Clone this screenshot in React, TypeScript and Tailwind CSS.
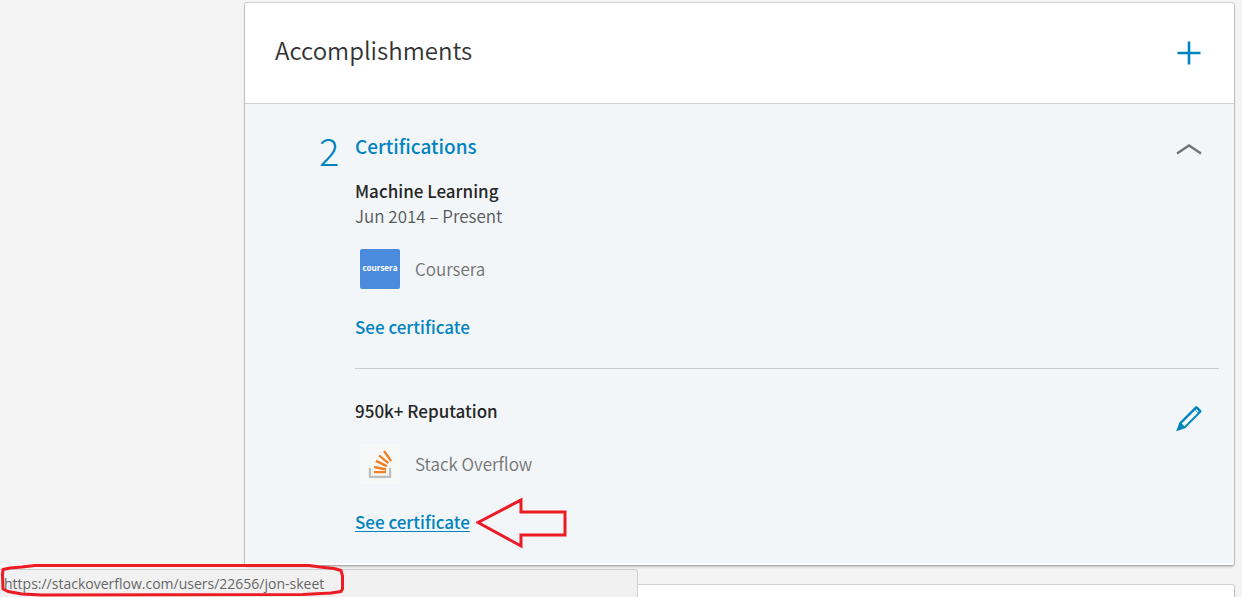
import type { ReactNode } from "react";

function CourseraLogo() {
  return (
    <span className="flex size-10 items-center justify-center rounded-xs bg-[#4a8bdd] pb-0.5 font-['Open_Sans',sans-serif] text-[8px] leading-none font-bold text-white">
      coursera
    </span>
  );
}

function StackOverflowLogo() {
  return (
    <svg viewBox="0 0 40 40" className="size-10 rounded-xs bg-[#f7f9f9]" aria-hidden="true">
      <path d="M9.9 24v8.9h20.2V24" fill="none" stroke="#bdbdbd" strokeWidth="2.2" />
      <g stroke="#f48024" strokeWidth="2.3">
        <path d="M14 28.2h12" />
        <path d="M14.2 23l11.9 2.5" />
        <path d="M15.9 16.9l11 5.2" />
        <path d="M19 11.4l9.4 7.8" />
        <path d="M24 7l7.2 10" />
      </g>
    </svg>
  );
}

type Certification = {
  name: string;
  period?: string;
  issuer: string;
  logo: ReactNode;
  href: string;
  editable?: boolean;
  active?: boolean;
};

const certifications: Certification[] = [
  {
    name: "Machine Learning",
    period: "Jun 2014 – Present",
    issuer: "Coursera",
    logo: <CourseraLogo />,
    href: "#coursera",
  },
  {
    name: "950k+ Reputation",
    issuer: "Stack Overflow",
    logo: <StackOverflowLogo />,
    href: "https://stackoverflow.com/users/22656/jon-skeet",
    editable: true,
    active: true,
  },
];

function CertificationItem({ item }: { item: Certification }) {
  return (
    <li className="flex items-start justify-between border-t border-[#c8ccd0] pt-[30px] pb-[27px] first:border-0 first:pt-[17px]">
      <div>
        <h4 className="text-[17px] leading-6 font-medium text-[#262626]">{item.name}</h4>
        {item.period && <p className="text-[17px] leading-[25px] font-[350] text-[#595959]">{item.period}</p>}
        <div className="mt-[21px] flex items-center gap-[15px] pl-[5px]">
          {item.logo}
          <span className="text-[17px] leading-6 font-[350] text-[#737373]">{item.issuer}</span>
        </div>
        <div className="relative mt-6 w-max">
          <a
            href={item.href}
            className={
              item.active
                ? "block text-[17px] leading-7 font-medium text-[#0084bf] underline decoration-1 underline-offset-2"
                : "block text-[17px] leading-7 font-medium text-[#0084bf]"
            }
          >
            See certificate
          </a>
          {item.active && (
            <svg viewBox="0 0 92 52" className="absolute top-[-11px] left-[121px] h-[52px] w-[92px]" aria-hidden="true">
              <path d="M2 25.5L45 3v12h44v23H45v11z" fill="none" stroke="#ed1c24" strokeWidth="3" />
            </svg>
          )}
        </div>
      </div>
      {item.editable && (
        <button type="button" aria-label="Edit certification" className="mt-1.5 mr-4 cursor-pointer text-[#0084bf]">
          <svg viewBox="0 0 28 28" className="size-7" aria-hidden="true">
            <path
              fillRule="evenodd"
              fill="currentColor"
              d="M20.6 1.3L4.4 17.5 1.2 26.3 10.2 23.3 26.4 7.1V5.6L22.1 1.3ZM20 5.3L22.7 8 9.4 21.3 6.7 18.6ZM21.3 4L23.7 6.4 22.8 7.3 20.4 4.9Z"
            />
          </svg>
        </button>
      )}
    </li>
  );
}

export default function App() {
  return (
    <div className="min-h-screen overflow-hidden bg-[#f4f4f4] font-['Noto_Sans_CJK_JP',sans-serif]">
      <main className="mr-2 ml-[245px] pt-[3px]">
        <section className="rounded-xs bg-white pb-0.5 shadow-[0_0_0_1px_rgba(0,0,0,0.15),0_2px_3px_rgba(0,0,0,0.2)]">
          <header className="flex items-end justify-between border-b border-[#cbcfd2] pt-[23px] pr-8 pb-[29px] pl-[30px]">
            <h2 className="text-2xl leading-12 font-[350] text-[#333]">Accomplishments</h2>
            <button type="button" aria-label="Add accomplishment" className="mb-2 cursor-pointer text-[#0084bf]">
              <svg viewBox="0 0 26 26" className="size-[26px]" aria-hidden="true">
                <path d="M13 1.5v23M1.5 13h23" stroke="currentColor" strokeWidth="2.6" />
              </svg>
            </button>
          </header>
          <div className="flex gap-4 bg-[#f2f6f9] pt-[26px] pr-[15px] pl-[74px]">
            <span className="w-5 text-[38px] leading-10 font-light text-[#0084bf]">2</span>
            <div className="flex-1">
              <div className="flex items-end justify-between">
                <h3 className="text-[19px] leading-8 font-medium text-[#0084bf]">Certifications</h3>
                <button type="button" aria-label="Collapse certifications" className="mr-4 mb-[5px] cursor-pointer text-[#737373]">
                  <svg viewBox="0 0 28 16" className="h-4 w-7" aria-hidden="true">
                    <path d="M2 12.5L14 4.5l12 8" fill="none" stroke="currentColor" strokeWidth="2.4" />
                  </svg>
                </button>
              </div>
              <ul>
                {certifications.map((item) => (
                  <CertificationItem key={item.name} item={item} />
                ))}
              </ul>
            </div>
          </div>
        </section>
        <section className="mt-5 h-3 rounded-t-xs bg-white shadow-[0_0_0_1px_rgba(0,0,0,0.15),0_2px_3px_rgba(0,0,0,0.2)]" />
      </main>
      <div className="fixed bottom-0 left-0 flex h-7 w-[638px] items-center rounded-tr-sm border-t border-r border-[#cfcfcf] bg-[#f1f1f1] pl-1 font-['Open_Sans',sans-serif] text-sm text-[#666]">
        https://stackoverflow.com/users/22656/jon-skeet
        <svg viewBox="0 0 346 34" className="absolute bottom-0 left-0 h-[34px] w-[346px]" aria-hidden="true">
          <path
            d="M3 6.5L10 5 22 4 35 2.5H309L320 4 334 5.5 341 7.5 342.5 13V26L341 28.5 331 30 303 31.5 42 32 22 31 8 28.5 3 26 2.5 12Z"
            fill="none"
            stroke="#ed1c24"
            strokeWidth="3"
            strokeLinejoin="round"
          />
        </svg>
      </div>
    </div>
  );
}
